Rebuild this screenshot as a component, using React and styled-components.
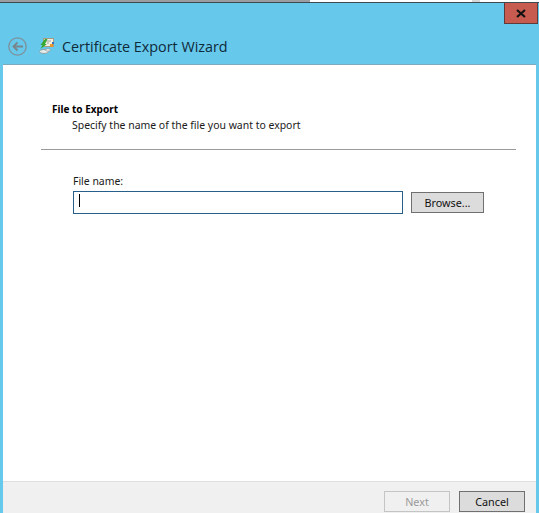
import styled, { createGlobalStyle } from 'styled-components';

const GlobalStyle = createGlobalStyle`
  html, body {
    margin: 0;
    padding: 0;
    background: #66c9ec;
  }
  * {
    box-sizing: border-box;
  }
`;

const Wizard = styled.div`
  width: 539px;
  height: 513px;
  display: flex;
  flex-direction: column;
  overflow: hidden;
  background: #66c9ec;
  font-family: 'Noto Sans', 'Liberation Sans', sans-serif;
`;

const BackStrip = styled.div`
  height: 2px;
  flex: none;
  background: linear-gradient(
    to right,
    #9a9ea2 0,
    #9a9ea2 310px,
    #ffffff 310px,
    #ffffff 472px,
    #d6d6d6 472px,
    #d6d6d6 480px,
    #ffffff 480px
  );
`;

const TitleBar = styled.div`
  height: 62px;
  flex: none;
  display: flex;
  flex-direction: column;
  border-top: 1px solid #3f4a50;
`;

const CloseRow = styled.div`
  height: 23px;
  flex: none;
  display: flex;
  justify-content: flex-end;
  padding-right: 1px;
`;

const CloseButton = styled.button`
  width: 34px;
  height: 21px;
  padding: 0;
  border: 1px solid #5e3a3a;
  border-top: none;
  background: #c75b50;
  display: flex;
  align-items: center;
  justify-content: center;
`;

const NavRow = styled.div`
  display: flex;
  align-items: center;
  height: 26px;
  margin-top: 7px;
  padding-left: 8px;
`;

const BackButton = styled.span`
  display: flex;
  width: 19px;
  height: 19px;
`;

const WizardIcon = styled.span`
  display: flex;
  width: 16px;
  height: 18px;
  margin-left: 12px;
`;

const WizardTitle = styled.h1`
  margin: 0 0 0 7px;
  font-family: 'Open Sans', 'Noto Sans', sans-serif;
  font-size: 14.35px;
  font-weight: 400;
  color: #0f2a3a;
`;

const Panel = styled.div`
  flex: 1;
  margin: 0 3px;
  display: flex;
  flex-direction: column;
  background: #ffffff;
  border-top: 1px solid #7fa9bd;
`;

const Body = styled.div`
  flex: 1;
`;

const Header = styled.div`
  padding: 38px 0 0 49px;
`;

const HeaderTitle = styled.div`
  font-size: 10px;
  font-weight: 700;
  line-height: 12px;
  color: #000000;
`;

const HeaderText = styled.div`
  margin: 4px 0 0 20px;
  font-size: 10.45px;
  line-height: 13px;
  color: #1a1a1a;
`;

const Rule = styled.hr`
  margin: 17px 20px 0 38px;
  border: none;
  height: 1px;
  background: #9a9a9a;
`;

const Field = styled.div`
  padding: 25px 0 0 70px;
`;

const FieldLabel = styled.label`
  display: block;
  font-size: 10.45px;
  line-height: 13px;
  color: #1a1a1a;
`;

const FieldRow = styled.div`
  display: flex;
  align-items: center;
  gap: 8px;
  margin-top: 3px;
`;

const FileInput = styled.div`
  width: 330px;
  height: 23px;
  border: 1px solid #265f8c;
  padding: 2px 5px;
`;

const Caret = styled.div`
  width: 1px;
  height: 13px;
  background: #000000;
`;

const Button = styled.button`
  width: ${props => props.$width}px;
  height: 21px;
  padding: 0;
  font-family: 'Noto Sans', 'Liberation Sans', sans-serif;
  font-size: 10.8px;
  color: ${props => (props.disabled ? '#9a9a9a' : '#111111')};
  background: ${props => (props.disabled ? '#f0f0f0' : '#dcdcdc')};
  border: 1px solid ${props => (props.disabled ? '#c4c4c4' : '#707070')};
`;

const Footer = styled.div`
  height: 32px;
  flex: none;
  display: flex;
  justify-content: flex-end;
  gap: 9px;
  padding: 9px 11px 0 0;
  background: #f0f0f0;
  border-top: 1px solid #dfdfdf;
`;

const App = () => {
  return (
    <>
      <GlobalStyle />
      <Wizard>
        <BackStrip />
        <TitleBar>
          <CloseRow>
            <CloseButton aria-label="Close">
              <svg width="10" height="9" viewBox="0 0 10 9">
                <path d="M1 1 L9 8 M9 1 L1 8" stroke="#111" strokeWidth="2.2" fill="none" />
              </svg>
            </CloseButton>
          </CloseRow>
          <NavRow>
            <BackButton>
              <svg width="19" height="19" viewBox="0 0 19 19">
                <circle cx="9.5" cy="9.5" r="8.7" fill="none" stroke="#7f8f98" strokeWidth="1.3" />
                <path d="M15 9.5 H6 M9.5 5.5 L5.5 9.5 L9.5 13.5" fill="none" stroke="#78868e" strokeWidth="2" />
              </svg>
            </BackButton>
            <WizardIcon>
              <svg width="16" height="18" viewBox="0 0 16 18">
                <rect x="4.5" y="1.5" width="10" height="8" fill="#f4efe2" stroke="#a89a80" strokeWidth="1" />
                <path d="M7 4 H12 M8 6 H10" stroke="#9aa7a0" strokeWidth="1" />
                <rect x="11" y="7" width="3" height="3" fill="#e8962a" />
                <rect x="13" y="5" width="2" height="2" fill="#3a6fc0" />
                <path d="M6 2 L1.5 8 H3.5 L1.5 12 L8 7 H6 L8.5 2 Z" fill="#35a82f" />
                <ellipse cx="5" cy="14.5" rx="4.5" ry="2" fill="#e6ecec" stroke="#7d8a8a" strokeWidth="0.7" />
                <ellipse cx="9" cy="13" rx="2.5" ry="1.2" fill="#f2f5f5" stroke="#7d8a8a" strokeWidth="0.6" />
              </svg>
            </WizardIcon>
            <WizardTitle>Certificate Export Wizard</WizardTitle>
          </NavRow>
        </TitleBar>
        <Panel>
          <Body>
            <Header>
              <HeaderTitle>File to Export</HeaderTitle>
              <HeaderText>Specify the name of the file you want to export</HeaderText>
            </Header>
            <Rule />
            <Field>
              <FieldLabel>File name:</FieldLabel>
              <FieldRow>
                <FileInput>
                  <Caret />
                </FileInput>
                <Button $width={73}>Browse...</Button>
              </FieldRow>
            </Field>
          </Body>
          <Footer>
            <Button $width={66} disabled>
              Next
            </Button>
            <Button $width={66}>Cancel</Button>
          </Footer>
        </Panel>
      </Wizard>
    </>
  );
};

export default App;
